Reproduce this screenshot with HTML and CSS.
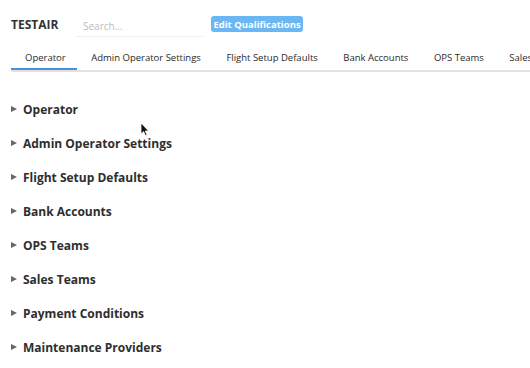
FILE: index.html
```html
<!DOCTYPE html>
<html lang="en">
<head>
    <meta charset="UTF-8">
    <title>TESTAIR - Operator</title>
    <link rel="stylesheet" href="styles.css">
</head>
<body>
    <div class="header">
        <span class="operator-name">TESTAIR</span>
        <input class="search" type="text" placeholder="Search...">
        <button class="edit-btn">Edit Qualifications</button>
    </div>

    <div class="tabs">
        <div class="tab active">Operator</div>
        <div class="tab">Admin Operator Settings</div>
        <div class="tab">Flight Setup Defaults</div>
        <div class="tab">Bank Accounts</div>
        <div class="tab">OPS Teams</div>
        <div class="tab">Sales Teams</div>
    </div>

    <div class="sections">
        <details class="section"><summary>Operator</summary></details>
        <details class="section"><summary>Admin Operator Settings</summary></details>
        <details class="section"><summary>Flight Setup Defaults</summary></details>
        <details class="section"><summary>Bank Accounts</summary></details>
        <details class="section"><summary>OPS Teams</summary></details>
        <details class="section"><summary>Sales Teams</summary></details>
        <details class="section"><summary>Payment Conditions</summary></details>
        <details class="section"><summary>Maintenance Providers</summary></details>
    </div>

    <svg class="cursor" width="10" height="15" viewBox="0 0 10 15">
        <path d="M1 1 L1 12 L3.6 9.6 L5.4 13.6 L7 12.9 L5.3 9 L8.6 9 Z" fill="#111" stroke="#fff" stroke-width="0.8"/>
    </svg>
</body>
</html>
```

FILE: styles.css
```css
* {
    margin: 0;
    padding: 0;
    box-sizing: border-box;
}

body {
    font-family: 'Open Sans', 'Liberation Sans', sans-serif;
    background: #fff;
    color: #333;
    width: 530px;
    height: 368px;
    overflow: hidden;
    position: relative;
}

.header {
    display: flex;
    align-items: center;
    height: 48px;
    padding: 0 11px;
}

.operator-name {
    font-size: 12px;
    font-weight: 700;
    color: #333;
    width: 65px;
}

.search {
    width: 127px;
    height: 22px;
    border: none;
    border-bottom: 1px solid #eee;
    padding: 0 7px;
    font-family: inherit;
    font-size: 10px;
    color: #333;
    outline: none;
    margin-top: 4px;
}

.search::placeholder {
    color: #bbb;
}

.edit-btn {
    margin-left: 8px;
    width: 92px;
    height: 16px;
    border: none;
    border-radius: 3px;
    background: #6ab7f3;
    color: #fff;
    font-family: inherit;
    font-size: 9.5px;
    font-weight: 700;
    white-space: nowrap;
}

.tabs {
    display: flex;
    margin: 0 0 0 11px;
    border-bottom: 2px solid #e2e2e2;
    white-space: nowrap;
    height: 24px;
    overflow: hidden;
}

.tab {
    font-size: 9.5px;
    padding: 3px 11.5px 0 14px;
    color: #2a2a2a;
    flex-shrink: 0;
}

.tab.active {
    border-bottom: 2px solid #4a90d9;
}

.sections {
    padding: 20px 11px 0;
}

.section summary {
    list-style: none;
    display: flex;
    align-items: center;
    height: 34px;
    font-size: 12px;
    font-weight: 700;
    color: #2e2e2e;
    cursor: pointer;
}

.section summary::before {
    content: "";
    width: 0;
    height: 0;
    border-top: 3.5px solid transparent;
    border-bottom: 3.5px solid transparent;
    border-left: 6px solid #666;
    margin-right: 6px;
}

.cursor {
    position: absolute;
    left: 140px;
    top: 122px;
}
```
